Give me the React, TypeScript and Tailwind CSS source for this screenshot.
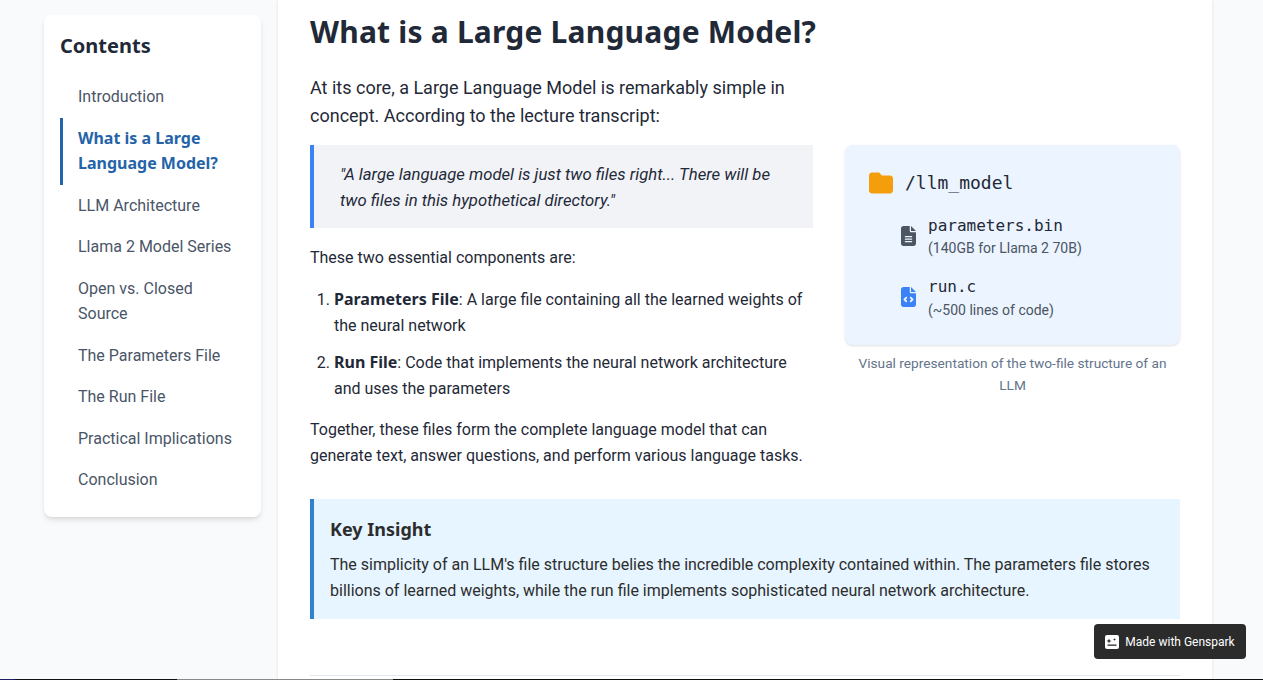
const navItems = [
  'Introduction',
  'What is a Large Language Model?',
  'LLM Architecture',
  'Llama 2 Model Series',
  'Open vs. Closed Source',
  'The Parameters File',
  'The Run File',
  'Practical Implications',
  'Conclusion',
];

const bold = { fontFamily: '"Noto Sans", sans-serif' };
const mono = { fontFamily: '"DejaVu Sans Mono", monospace' };

function FolderIcon() {
  return (
    <svg viewBox="0 0 512 512" className="w-6 h-6 shrink-0 fill-[#f59e0b]">
      <path d="M64 480H448c35.300 0 64-28.700 64-64V160c0-35.300-28.700-64-64-64H288c-10.100 0-19.600-4.700-25.600-12.800L243.200 57.600C231.100 41.500 212.100 32 192 32H64C28.700 32 0 60.700 0 96V416c0 35.300 28.700 64 64 64z" />
    </svg>
  );
}

function FileLines() {
  return (
    <svg viewBox="0 0 384 512" className="w-[15px] h-5 shrink-0 fill-[#4b5563]">
      <path d="M64 0C28.700 0 0 28.700 0 64V448c0 35.300 28.700 64 64 64H320c35.300 0 64-28.700 64-64V160H256c-17.700 0-32-14.300-32-32V0H64zM256 0V128H384L256 0zM112 256H272c8.800 0 16 7.200 16 16s-7.200 16-16 16H112c-8.800 0-16-7.200-16-16s7.200-16 16-16zm0 64H272c8.800 0 16 7.200 16 16s-7.200 16-16 16H112c-8.800 0-16-7.200-16-16s7.200-16 16-16zm0 64H272c8.800 0 16 7.200 16 16s-7.200 16-16 16H112c-8.800 0-16-7.200-16-16s7.200-16 16-16z" />
    </svg>
  );
}

function FileCode() {
  return (
    <svg viewBox="0 0 384 512" className="w-[15px] h-5 shrink-0 fill-[#3b82f6]">
      <path d="M64 0C28.700 0 0 28.700 0 64V448c0 35.300 28.700 64 64 64H320c35.300 0 64-28.700 64-64V160H256c-17.700 0-32-14.300-32-32V0H64zM256 0V128H384L256 0zM153 289l-31 31 31 31c9.400 9.400 9.400 24.600 0 33.900s-24.600 9.400-33.900 0L71 337c-9.400-9.400-9.400-24.600 0-33.900l48-48c9.400-9.400 24.600-9.400 33.900 0s9.400 24.600 0 33.900zM265 255l48 48c9.400 9.400 9.400 24.600 0 33.900l-48 48c-9.400 9.400-24.600 9.400-33.900 0s-9.400-24.600 0-33.900l31-31-31-31c-9.400-9.400-9.400-24.600 0-33.900s24.600-9.400 33.900 0z" />
    </svg>
  );
}

export default function App() {
  return (
    <div className="h-[680px] overflow-hidden bg-[#f8fafc] text-[#1f2937] relative font-['Roboto',sans-serif]">
      <div className="flex h-[679px] pl-[32px] pr-[51px]">
        {/* Sidebar */}
        <aside className="w-[246px] shrink-0 pl-3 pt-[15px]">
          <div className="w-[217px] bg-white rounded-lg shadow-md p-4">
            <h3 style={bold} className="text-xl font-bold text-[#1f2937] leading-[30px] mb-[15px]">Contents</h3>
            <ul>
              {navItems.map((item) =>
                item.startsWith('What') ? (
                  <li
                    key={item}
                    style={bold}
                    className="border-l-[3px] border-[#2563a8] pl-[15px] pr-2 py-2 text-base leading-[25.5px] font-bold text-[#2563a8]"
                  >
                    {item}
                  </li>
                ) : (
                  <li
                    key={item}
                    className="border-l-[3px] border-transparent pl-[15px] pr-3 py-2 text-base leading-[25.5px] text-[#4a5568]"
                  >
                    {item}
                  </li>
                ),
              )}
            </ul>
          </div>
        </aside>

        {/* Main article */}
        <main className="w-[934px] bg-white shadow-sm px-8 overflow-hidden">
          <h2 style={bold} className="text-[30px] font-bold leading-[36px] tracking-[0.2px] text-[#1f2937] mt-[14px] mb-[24px]">
            What is a Large Language Model?
          </h2>
          <div className="grid grid-cols-[503px_335px] gap-8">
            <div>
              <p className="text-lg leading-[28px] mb-[15px] text-[#1f2937]">
                At its core, a Large Language Model is remarkably simple in concept. According to the lecture transcript:
              </p>
              <blockquote className="border-l-4 border-[#3b82f6] bg-[#f1f3f7] pl-[26px] pr-6 pt-[17px] pb-[14px] italic text-[16.7px] leading-[26px] text-[#1f2937]">
                "A large language model is just two files right... There will be two files in this hypothetical directory."
              </blockquote>
              <p className="text-base leading-[26px] mt-[17px]">These two essential components are:</p>
              <ol className="list-decimal pl-6 mt-4 text-base leading-[26px]">
                <li className="mb-[11px]">
                  <strong style={bold} className="text-base">Parameters File</strong>: A large file containing all the learned weights of the neural network
                </li>
                <li>
                  <strong style={bold} className="text-base">Run File</strong>: Code that implements the neural network architecture and uses the parameters
                </li>
              </ol>
              <p className="text-base leading-[26px] mt-[15px]">
                Together, these files form the complete language model that can generate text, answer questions, and perform various language tasks.
              </p>
            </div>

            <div className="mt-[71px]">
              <div className="bg-[#ebf4ff] rounded-lg shadow-sm px-6 pt-[26px] pb-[26px]">
                <div className="flex items-center gap-3 h-6">
                  <FolderIcon />
                  <span className="text-lg" style={mono}>/llm_model</span>
                </div>
                <div className="pl-8 mt-[19px] flex flex-col gap-[17px]">
                  <div className="flex items-center gap-3">
                    <FileLines />
                    <div>
                      <div className="text-base leading-6" style={mono}>parameters.bin</div>
                      <div className="text-sm leading-5 text-[#4b5563]">(140GB for Llama 2 70B)</div>
                    </div>
                  </div>
                  <div className="flex items-center gap-3">
                    <FileCode />
                    <div>
                      <div className="text-base leading-6" style={mono}>run.c</div>
                      <div className="text-sm leading-5 mt-px -mb-px text-[#4b5563]">(~500 lines of code)</div>
                    </div>
                  </div>
                </div>
              </div>
              <p className="text-[13.7px] leading-[22px] text-[#64748b] text-center mt-[7px]">
                Visual representation of the two-file structure of an LLM
              </p>
            </div>
          </div>

          <div className="mt-[30px] border-l-4 border-[#3182ce] bg-[#e6f5ff] px-4 pt-[17px] h-[120px] text-[#2d2d2d]">
            <h4 style={bold} className="text-lg font-bold leading-[26px] mb-[10px]">Key Insight</h4>
            <p className="text-base leading-[26px]">
              The simplicity of an LLM's file structure belies the incredible complexity contained within. The parameters file stores billions of learned weights, while the run file implements sophisticated neural network architecture.
            </p>
          </div>
          <hr className="mt-[56px] border-t border-[#e2e8f0]" />
        </main>
      </div>

      {/* Window edge */}
      <div className="flex h-px bg-[#111111]">
        <div className="w-[15px] bg-[#1e1b6b]" />
        <div className="w-[162px]" />
        <div className="w-[216px] bg-[#888888]" />
      </div>

      {/* Badge */}
      <div className="absolute left-[1094px] top-[624px] w-[152px] h-[35px] rounded bg-[#2b2b2b] text-white flex items-center justify-center gap-[6px] text-xs">
        <svg viewBox="0 0 14 14" className="w-[14px] h-[14px]">
          <rect width="14" height="14" rx="2" fill="#fff" />
          <path d="M4 3.500l.7 1.800 1.800.7-1.800.7L4 8.500l-.7-1.800-1.800-.7 1.800-.7zM9.500 3l.4 1.100 1.100.4-1.100.4-.4 1.100-.4-1.100L8 4.500l1.100-.4z" fill="#2b2b2b" />
          <rect x="2.500" y="9.500" width="9" height="1.300" fill="#2b2b2b" />
        </svg>
        <span>Made with Genspark</span>
      </div>
    </div>
  );
}
